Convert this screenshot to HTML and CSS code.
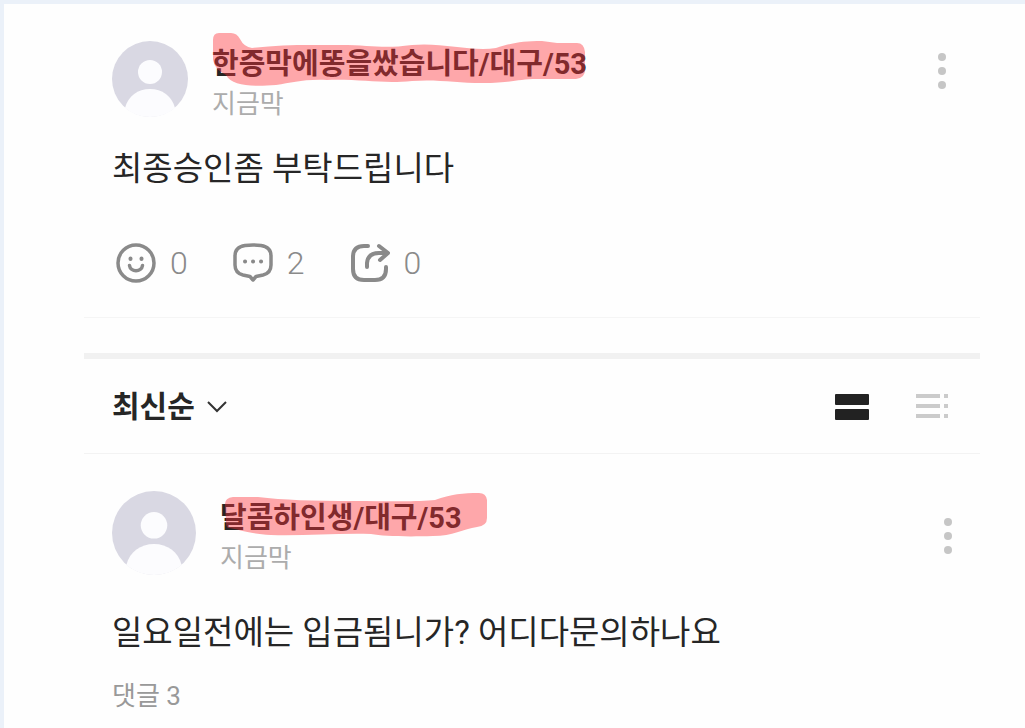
FILE: index.html
```html
<!DOCTYPE html>
<html lang="ko">
<head>
    <meta charset="UTF-8">
    <meta name="viewport" content="width=device-width, initial-scale=1.0">
    <title>최신순</title>
    <link rel="stylesheet" href="styles.css">
</head>
<body>

    <main class="feed">

        <article class="post">
            <header class="post-header">
                <svg class="avatar" viewBox="0 0 76 76" aria-hidden="true">
                    <circle cx="38" cy="38" r="38" fill="#d9d8e3"/>
                    <circle cx="38" cy="31" r="12" fill="#fcfcfe"/>
                    <path d="M13 67C16 55 26 48 38 48s22 7 25 19C56 73 47 76 38 76s-18-3-25-9z" fill="#fcfcfe"/>
                </svg>
                <div class="author">
                    <h2 class="name">
                        한증막에똥을쌌습니다/대구/53
                        <svg class="marker marker-long" viewBox="0 0 378 54" aria-hidden="true">
                            <path d="M1 8Q1 1 7 1H19Q25 1 28 7Q32 15 40 16C70 12 100 13 128 13C160 13 170 17 200 13C230 10 260 20 284 16C300 11 310 9 330 9L345 11H365Q372 11 373 20V36Q374 46 364 47L325 47C305 47 300 51 270 51C245 51 225 47 200 49C170 52 150 47 115 48C90 47 80 51 64 53C40 55 20 54 14 43Q3 38 1 28Z"/>
                        </svg>
                    </h2>
                    <span class="time">지금막</span>
                </div>
                <button class="more" type="button" aria-label="더보기">
                    <svg width="8" height="36" viewBox="0 0 8 36" fill="#c6c6c6"><circle cx="4" cy="4" r="4"/><circle cx="4" cy="18" r="4"/><circle cx="4" cy="32" r="4"/></svg>
                </button>
            </header>

            <p class="text">최종승인좀 부탁드립니다</p>

            <div class="actions">
                <button class="action" type="button" aria-label="표정 0">
                    <svg width="40" height="40" viewBox="0 0 40 40" fill="none" stroke="#8a8a8a" stroke-width="3.5" stroke-linecap="round">
                        <circle cx="20" cy="20" r="18"/>
                        <path d="M13.500 22.500c1 7 12 7 13 0"/>
                        <path d="M14.500 15.500v.5M25.500 15.500v.5" stroke-width="4"/>
                    </svg>
                    <span>0</span>
                </button>
                <button class="action" type="button" aria-label="댓글 2">
                    <svg width="40" height="40" viewBox="0 0 40 40" fill="none" stroke="#8a8a8a" stroke-width="3.5" stroke-linecap="round" stroke-linejoin="round">
                        <path d="M12 2.500Q20 1.500 28 2.500Q38 4 38 13V22Q38 30 30 32L23 33.500L20 37L17 33.500L10 32Q2 30 2 22V13Q2 4 12 2.500Z"/>
                        <path d="M12 18.500h.1M20 18.500h.1M28 18.500h.1" stroke-width="4"/>
                    </svg>
                    <span>2</span>
                </button>
                <button class="action" type="button" aria-label="공유 0">
                    <svg width="40" height="40" viewBox="0 0 40 40" fill="none" stroke="#8a8a8a" stroke-width="4" stroke-linecap="round" stroke-linejoin="round">
                        <path d="M18 3H14Q3 3 3 14V26Q3 37 14 37H25Q36 37 36 26V24"/>
                        <path d="M17 24V20Q18 10 29 10H37"/>
                        <path d="M29 3L38 10L30 17"/>
                    </svg>
                    <span>0</span>
                </button>
            </div>
        </article>

        <div class="sort-bar">
            <button class="sort" type="button">
                최신순
                <svg width="20" height="12" viewBox="0 0 20 12" fill="none" stroke="#333" stroke-width="2"><path d="M1 1l9 9 9-9"/></svg>
            </button>
            <div class="views">
                <button type="button" aria-label="카드형 보기">
                    <svg width="34" height="28" viewBox="0 0 34 28" fill="#222"><rect y="1" width="34" height="11" rx="1"/><rect y="16" width="34" height="11" rx="1"/></svg>
                </button>
                <button type="button" aria-label="목록형 보기">
                    <svg width="34" height="28" viewBox="0 0 34 28" fill="#cbcbcb">
                        <path d="M1 1h24v4H1zM1 11h24v4H1zM1 21h24v4H1zM29 1h4v4h-4zM29 11h4v4h-4zM29 21h4v4h-4z"/>
                    </svg>
                </button>
            </div>
        </div>

        <article class="post post-comment">
            <header class="post-header">
                <svg class="avatar" viewBox="0 0 76 76" aria-hidden="true">
                    <circle cx="38" cy="38" r="38" fill="#d9d8e3"/>
                    <circle cx="38" cy="31" r="12" fill="#fcfcfe"/>
                    <path d="M13 67C16 55 26 48 38 48s22 7 25 19C56 73 47 76 38 76s-18-3-25-9z" fill="#fcfcfe"/>
                </svg>
                <div class="author">
                    <h2 class="name">
                        달콤하인생/대구/53
                        <svg class="marker marker-short" viewBox="0 0 265 46" aria-hidden="true">
                            <path d="M2 12Q2 6 10 5L35 5C60 8 90 9 130 9C165 9 195 10 212 8C228 2 240 1 256 1Q263 1 264 8V26Q264 34 254 35C240 37 230 44 210 44C180 45 160 44 148 42C115 41 80 44 48 43C25 42 16 37 6 36Q3 36 3 30Z"/>
                        </svg>
                    </h2>
                    <span class="time">지금막</span>
                </div>
                <button class="more" type="button" aria-label="더보기">
                    <svg width="8" height="36" viewBox="0 0 8 36" fill="#c6c6c6"><circle cx="4" cy="4" r="4"/><circle cx="4" cy="18" r="4"/><circle cx="4" cy="32" r="4"/></svg>
                </button>
            </header>

            <p class="text">일요일전에는 입금됨니가? 어디다문의하나요</p>
            <a class="replies" href="#">댓글 3</a>
        </article>

    </main>

</body>
</html>
```
FILE: styles.css
```css
* {
    box-sizing: border-box;
}

body {
    margin: 0;
    padding: 4px 0 0 4px;
    background: #ebf1f9;
    color: #262626;
    font-family: Roboto, "Noto Sans CJK KR", sans-serif;
}

h2, p {
    margin: 0;
}

button {
    padding: 0;
    border: 0;
    background: none;
    color: inherit;
    font: inherit;
    cursor: pointer;
}

svg {
    display: block;
}

.feed {
    min-height: calc(100vh - 4px);
    padding: 0 45px 0 80px;
    background: #fefefe;
}

.post {
    padding: 37px 28px 34px;
    border-bottom: 1px solid #f5f5f5;
}

.post-header {
    display: flex;
    align-items: flex-start;
    gap: 24px;
}

.avatar {
    width: 76px;
    height: 76px;
}

.author {
    flex: 1;
    padding-top: 2px;
}

.name {
    position: relative;
    width: fit-content;
    font-size: 29px;
    font-weight: 700;
    line-height: 42px;
}

/* red highlighter stroke over the name */
.marker {
    position: absolute;
    top: -11px;
    left: 0;
    fill: #ff3036;
    fill-opacity: 0.42;
}

.marker-long {
    width: 378px;
    height: 54px;
}

.marker-short {
    top: -5px;
    left: 3px;
    width: 265px;
    height: 46px;
}

.time {
    display: block;
    color: #acacac;
    font-size: 26px;
    line-height: 38px;
}

.more {
    padding: 12px 6px;
}

.text {
    margin-top: 22px;
    font-size: 33px;
    line-height: 48px;
}

.actions {
    display: flex;
    gap: 45px;
    margin-top: 50px;
    padding-left: 4px;
}

.action {
    display: flex;
    align-items: center;
    gap: 14px;
    color: #8a8a8a;
    font-size: 32px;
    font-weight: 300;
    line-height: 40px;
}

.sort-bar {
    display: flex;
    justify-content: space-between;
    align-items: center;
    height: 101px;
    margin-top: 35px;
    padding: 2px 31px 0 28px;
    border-top: 6px solid #f1f1f1;
    border-bottom: 1px solid #f3f3f3;
}

.sort {
    display: flex;
    align-items: center;
    gap: 12px;
    font-size: 30px;
    font-weight: 700;
    line-height: 44px;
}

.views {
    display: flex;
    gap: 46px;
}

.post-comment {
    border-bottom: 0;
    padding-bottom: 0;
}

.post-comment .avatar {
    width: 84px;
    height: 84px;
}

.post-comment .author {
    padding-top: 6px;
}

.post-comment .more {
    padding: 27px 0 0;
}

.post-comment .text {
    margin-top: 32px;
}

.replies {
    display: block;
    width: fit-content;
    margin-top: 20px;
    color: #999;
    font-size: 26px;
    line-height: 38px;
    text-decoration: none;
}
```
